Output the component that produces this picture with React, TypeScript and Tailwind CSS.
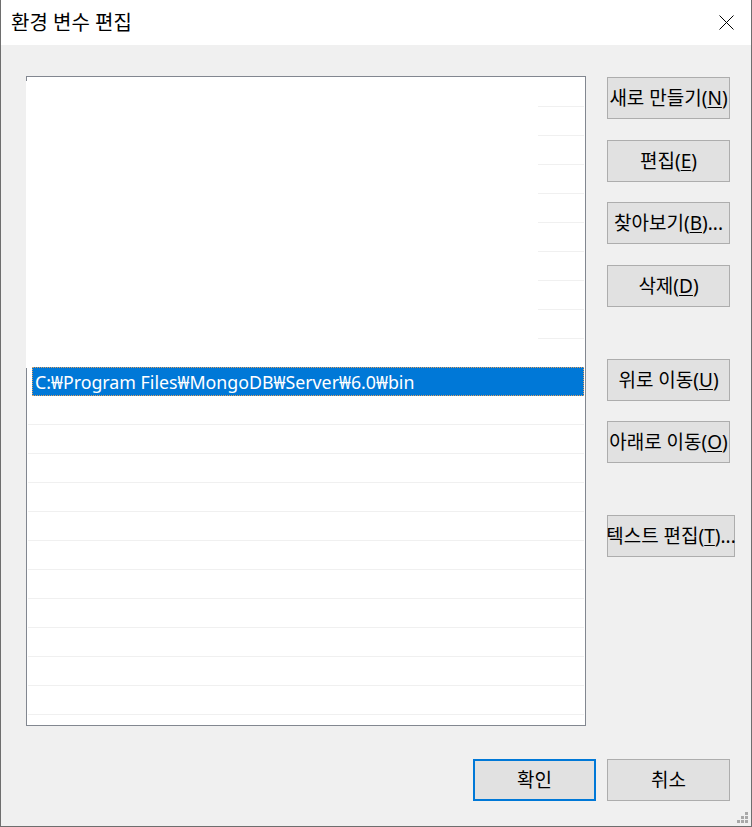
import React from "react";

const FONT = { fontFamily: '"Noto Sans", "Noto Sans CJK KR", sans-serif' };

function Btn({
  label,
  mn,
  tail = "",
  w = "w-[123px]",
  mt,
  primary = false,
}: {
  label: string;
  mn: string;
  tail?: string;
  w?: string;
  mt?: string;
  primary?: boolean;
}) {
  return (
    <div
      className={`${w} h-[42px] ${mt ?? ""} flex items-center justify-center bg-[#e1e1e1] ${
        primary ? "border-2 border-[#0078d7]" : "border border-[#adadad]"
      } text-[19px] leading-none text-black whitespace-nowrap`}
    >
      <span className="pt-[1px]">
        {label}
        {mn ? (
          <>
            (<span className="underline underline-offset-2">{mn}</span>){tail}
          </>
        ) : null}
      </span>
    </div>
  );
}

export default function App() {
  const topRows = Array.from({ length: 10 });
  const bottomRows = Array.from({ length: 12 });
  return (
    <div
      className="w-[752px] h-[827px] flex flex-col bg-[#f0f0f0] border-l border-r border-b border-[#6e6e6e] overflow-hidden relative"
      style={FONT}
    >
      {/* title bar */}
      <div className="h-[45px] bg-white flex items-center justify-between pl-[10px] pr-[17px] shrink-0">
        <span className="text-[20px] leading-none text-black">환경 변수 편집</span>
        <svg width="15" height="15" viewBox="0 0 15 15">
          <path d="M0.5 0.5 L14.5 14.5 M14.5 0.5 L0.5 14.5" stroke="#000" strokeWidth="1" fill="none" />
        </svg>
      </div>

      {/* body */}
      <div className="flex-1 flex flex-col">
        <div className="flex pl-[25px] pt-[31px]">
          {/* list */}
          <div className="w-[560px] h-[650px] bg-white border-t border-r border-b border-[#828790] overflow-hidden flex flex-col pt-[1px] relative">
            <div className="absolute left-0 top-0 w-px h-[4px] bg-[#828790]" />
            {topRows.map((_, i) => (
              <div key={"t" + i} className="h-[29px] shrink-0 flex flex-col justify-end border-l border-white">
                {i < 9 ? <div className="h-px bg-[#f0f0f0] ml-[511px] mr-[1px]" /> : null}
              </div>
            ))}
            <div className="flex flex-col border-l border-[#828790]">
              <div className="h-[29px] shrink-0 -mt-[1px] ml-[5px] mr-[1px] bg-[#0078d7] border border-dotted border-[#e0a060] flex items-center pl-[2px]">
                <span className="text-[17.8px] leading-none text-white whitespace-nowrap pt-[2px]">
                  C:₩Program Files₩MongoDB₩Server₩6.0₩bin
                </span>
              </div>
              {bottomRows.map((_, i) => (
                <div key={"b" + i} className="h-[29px] shrink-0 flex flex-col justify-end">
                  <div className="h-px bg-[#f0f0f0] ml-[1px] mr-[1px]" />
                </div>
              ))}
            </div>
          </div>

          {/* buttons */}
          <div className="ml-[21px] pt-[1px] flex flex-col">
            <Btn label="새로 만들기" mn="N" />
            <Btn label="편집" mn="E" mt="mt-[21px]" />
            <Btn label="찾아보기" mn="B" tail="..." mt="mt-[20px]" />
            <Btn label="삭제" mn="D" mt="mt-[21px]" />
            <Btn label="위로 이동" mn="U" mt="mt-[52px]" />
            <Btn label="아래로 이동" mn="O" mt="mt-[20px]" />
            <Btn label="텍스트 편집" mn="T" tail="..." w="w-[128px]" mt="mt-[52px]" />
          </div>
        </div>

        <div className="flex justify-end gap-[11px] pr-[21px] mt-[33px]">
          <Btn label="확인" mn="" primary />
          <Btn label="취소" mn="" />
        </div>
      </div>

      {/* resize grip */}
      <div className="absolute right-[3px] bottom-[3px] grid grid-cols-3 gap-[1px]">
        <div className="w-[3px] h-[3px]" />
        <div className="w-[3px] h-[3px]" />
        <div className="w-[3px] h-[3px] bg-[#a8a8a8]" />
        <div className="w-[3px] h-[3px]" />
        <div className="w-[3px] h-[3px] bg-[#a8a8a8]" />
        <div className="w-[3px] h-[3px] bg-[#a8a8a8]" />
        <div className="w-[3px] h-[3px] bg-[#a8a8a8]" />
        <div className="w-[3px] h-[3px] bg-[#a8a8a8]" />
        <div className="w-[3px] h-[3px] bg-[#a8a8a8]" />
      </div>
    </div>
  );
}
